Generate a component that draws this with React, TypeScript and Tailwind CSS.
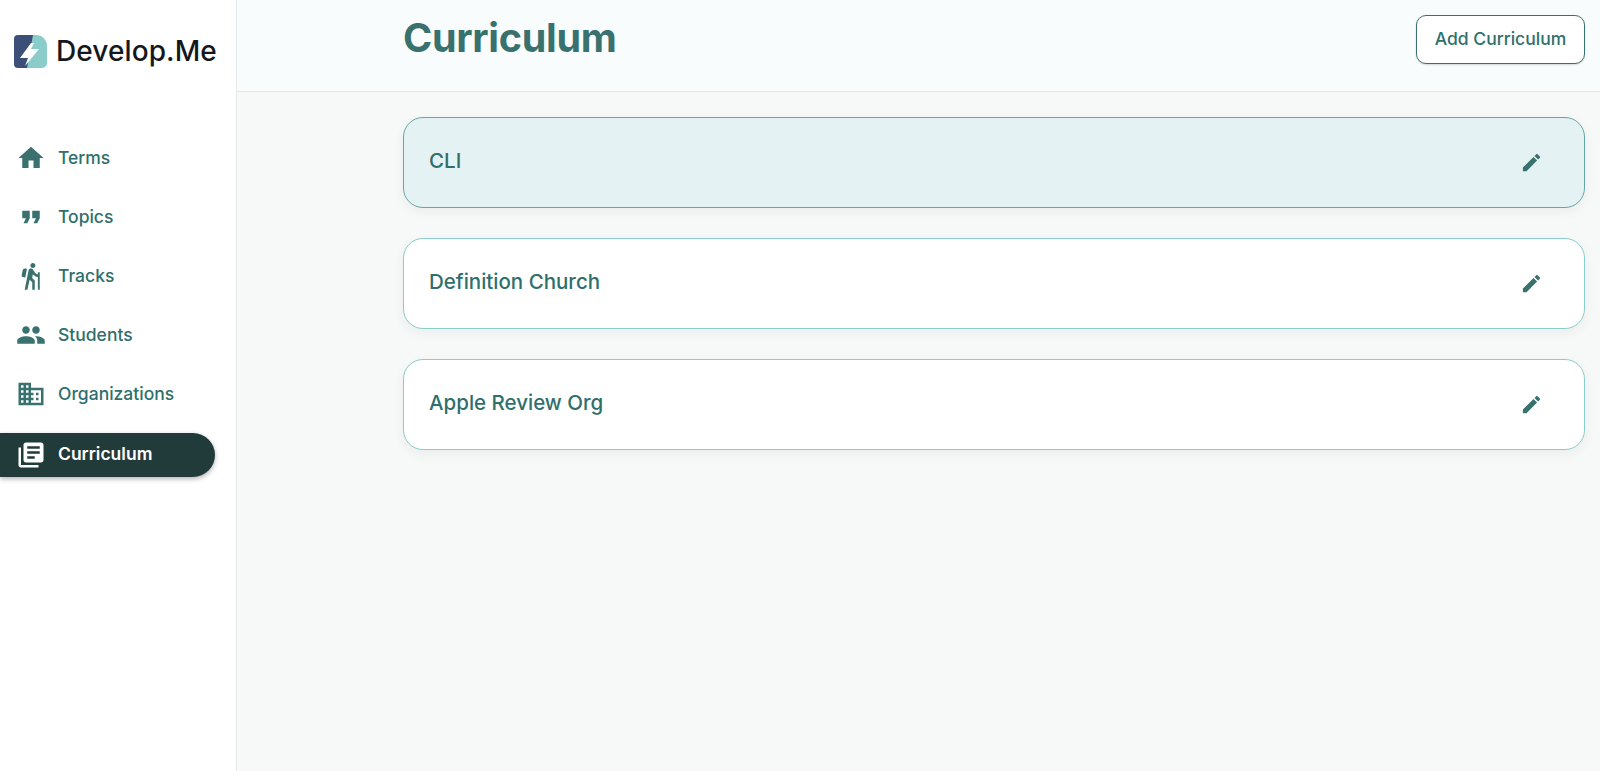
import { MdHome, MdFormatQuote, MdHiking, MdPeople, MdDomain, MdLibraryBooks, MdEdit } from "react-icons/md";

const navItems = [
  { label: "Terms", icon: MdHome },
  { label: "Topics", icon: MdFormatQuote },
  { label: "Tracks", icon: MdHiking },
  { label: "Students", icon: MdPeople },
  { label: "Organizations", icon: MdDomain },
  { label: "Curriculum", icon: MdLibraryBooks, active: true },
];

const curricula = [
  { name: "CLI", selected: true },
  { name: "Definition Church" },
  { name: "Apple Review Org" },
];

function Logo() {
  return (
    <svg width="33" height="33" viewBox="0 0 33 33">
      <path d="M18 0H22a11 11 0 0 1 11 11V28a5 5 0 0 1-5 5H10z" fill="#8accc9" />
      <path d="M4 0H19L13 33H4a4 4 0 0 1-4-4V4a4 4 0 0 1 4-4z" fill="#3c4f78" />
      <path d="M17 8L6 23H14L11 31L25 14H17L20 8z" fill="#fff" />
    </svg>
  );
}

export default function App() {
  return (
    <div className="flex h-[771px] bg-[#f7f9f9] font-['Inter',sans-serif] overflow-hidden">
      <aside className="w-[237px] shrink-0 bg-white border-r border-[#e4e7e7]">
        <div className="flex items-start gap-[9px] pl-[14px] pt-[35px] h-[136px]">
          <Logo />
          <span className="text-[28px] leading-[33px] font-medium text-[#14181c] tracking-[0.1px]">Develop.Me</span>
        </div>
        <nav className="flex flex-col gap-[15px] pr-[21px]">
          {navItems.map(item => {
            const Icon = item.icon;
            return (
              <div
                key={item.label}
                className={
                  item.active
                    ? "flex items-center h-[44px] mt-[2px] pl-[16px] gap-[12px] rounded-r-[22px] bg-[#213b3b] text-white font-semibold shadow-[0_2px_5px_rgba(0,0,0,0.3)]"
                    : "flex items-center h-[44px] pl-[16px] gap-[12px] text-[#2f6f6c] font-medium"
                }
              >
                <Icon size={30} className={item.active ? "text-white" : "text-[#39716f]"} />
                <span className={item.active ? "text-[17.5px] mb-[2px]" : "text-[17.5px]"}>{item.label}</span>
              </div>
            );
          })}
        </nav>
      </aside>
      <div className="flex-1 flex flex-col">
        <header className="h-[92px] shrink-0 bg-[#f9fcfc] border-b border-[#e4e7e7] flex items-start justify-between pl-[166px] pr-[15px]">
          <h1 className="text-[39.5px] leading-[76px] font-bold text-[#39716f] tracking-[-0.3px]">Curriculum</h1>
          <button className="mt-[15px] w-[169px] h-[49px] rounded-[10px] border border-[#39716f] bg-white text-[17.5px] font-medium text-[#2f6f6c] shadow-[0_1px_2px_rgba(0,0,0,0.15)]">
            Add Curriculum
          </button>
        </header>
        <main className="flex flex-col gap-[30px] pt-[25px] pl-[166px] pr-[15px]">
          {curricula.map(c => (
            <div
              key={c.name}
              className={
                c.selected
                  ? "h-[91px] flex items-center justify-between pl-[25px] pr-[41px] rounded-[20px] border border-[#66a6a6] bg-[#e5f2f3] shadow-[0_4px_12px_rgba(0,0,0,0.05)]"
                  : "h-[91px] flex items-center justify-between pl-[25px] pr-[41px] rounded-[20px] border border-[#8accc9] bg-white shadow-[0_4px_12px_rgba(0,0,0,0.05)]"
              }
            >
              <span className="text-[20.5px] font-medium text-[#2f6f6c] mb-[2px]">{c.name}</span>
              <MdEdit size={23} className="text-[#39716f]" />
            </div>
          ))}
        </main>
      </div>
    </div>
  );
}
